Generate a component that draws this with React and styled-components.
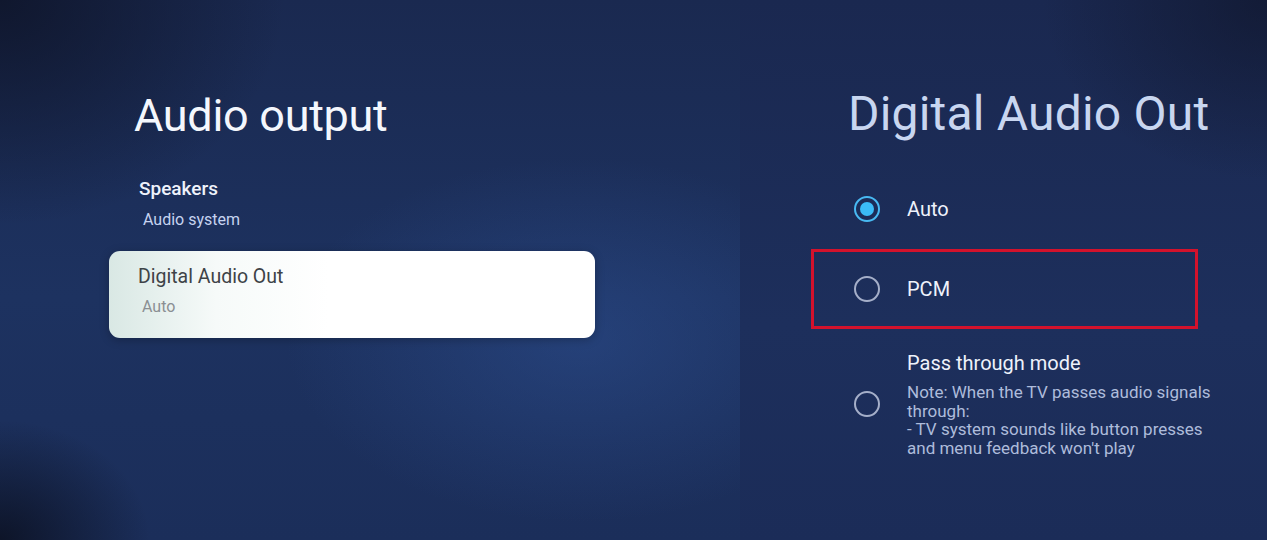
import React from "react";
import styled, { createGlobalStyle } from "styled-components";

// Estilos globales
const GlobalStyle = createGlobalStyle`
  html, body {
    margin: 0;
    padding: 0;
    background: #141d36;
    font-family: Roboto, "Noto Sans", "Liberation Sans", sans-serif;
  }
`;

const Screen = styled.div`
  width: 1267px;
  height: 540px;
  display: flex;
  overflow: hidden;
  background: #17254c;
`;

const LeftPanel = styled.section`
  width: 740px;
  flex-shrink: 0;
  box-sizing: border-box;
  padding: 86px 0 0 109px;
  display: flex;
  flex-direction: column;
  background:
    radial-gradient(ellipse 420px 260px at 580px 340px, rgba(50, 88, 160, 0.4), rgba(50, 88, 160, 0) 70%),
    radial-gradient(ellipse 380px 300px at 0px 0px, rgba(14, 20, 40, 0.85), rgba(14, 20, 40, 0) 75%),
    radial-gradient(ellipse 200px 160px at 0px 540px, rgba(10, 14, 28, 0.8), rgba(10, 14, 28, 0) 75%),
    linear-gradient(180deg, #1a2950 0%, #1d3260 55%, #1b2e5a 100%);
`;

const RightPanel = styled.section`
  flex: 1;
  box-sizing: border-box;
  padding: 84px 0 0 71px;
  display: flex;
  flex-direction: column;
  background:
    radial-gradient(ellipse 300px 240px at 527px 0px, rgba(16, 22, 44, 0.7), rgba(16, 22, 44, 0) 75%),
    linear-gradient(180deg, #1a2850 0%, #1d2f5c 60%, #1b2c58 100%);
`;

const Title = styled.h1`
  margin: 0 0 ${({ $gap }) => $gap}px ${({ $indent }) => $indent}px;
  font-size: ${({ $size }) => $size}px;
  font-weight: 400;
  line-height: 60px;
  letter-spacing: ${({ $spacing }) => $spacing || 0}px;
  color: ${({ $color }) => $color};
  white-space: nowrap;
`;

const MenuItem = styled.div`
  width: 486px;
  box-sizing: border-box;
  padding: ${({ $selected }) => ($selected ? "13px 29px 0" : "0 30px")};
  height: ${({ $selected }) => ($selected ? "87px" : "auto")};
  margin-bottom: ${({ $selected }) => ($selected ? "0" : "20px")};
  border-radius: 11px;
  background: ${({ $selected }) =>
    $selected
      ? "linear-gradient(90deg, #d9e8e4 0%, #f6faf9 22%, #ffffff 45%, #ffffff 100%)"
      : "transparent"};
  box-shadow: ${({ $selected }) => ($selected ? "0 2px 10px rgba(0,0,0,0.25)" : "none")};
`;

const ItemTitle = styled.div`
  font-size: ${({ $selected }) => ($selected ? "19.5px" : "19px")};
  line-height: 26px;
  font-weight: ${({ $selected }) => ($selected ? 400 : 500)};
  color: ${({ $selected }) => ($selected ? "#3e4347" : "#eef2fb")};
`;

const ItemValue = styled.div`
  margin-top: ${({ $selected }) => ($selected ? "6px" : "7px")};
  margin-left: 4px;
  font-size: 16px;
  line-height: 22px;
  color: ${({ $selected }) => ($selected ? "#8b8f93" : "#c6d3f0")};
`;

const Options = styled.div`
  display: flex;
  flex-direction: column;
  width: 387px;
`;

const Option = styled.div`
  display: flex;
  align-items: ${({ $multi }) => ($multi ? "flex-start" : "center")};
  gap: 27px;
  box-sizing: border-box;
  height: ${({ $height }) => $height}px;
  padding-left: 40px;
  border: 3px solid ${({ $marked }) => ($marked ? "#d3122c" : "transparent")};
`;

const Radio = styled.span`
  width: 26px;
  height: 26px;
  flex-shrink: 0;
  box-sizing: border-box;
  border-radius: 50%;
  border: 2px solid ${({ $checked }) => ($checked ? "#48b9f2" : "#a5afc9")};
  display: flex;
  align-items: center;
  justify-content: center;
  margin-top: ${({ $offset }) => $offset || 0}px;

  &::after {
    content: "";
    display: ${({ $checked }) => ($checked ? "block" : "none")};
    width: 14px;
    height: 14px;
    border-radius: 50%;
    background: #3bbcf7;
  }
`;

const OptionLabel = styled.div`
  font-size: 20px;
  line-height: 24px;
  color: #eef2fb;
`;

const OptionBody = styled.div`
  display: flex;
  flex-direction: column;
  padding-top: 19px;
`;

const Note = styled.div`
  margin-top: 8px;
  font-size: 17px;
  line-height: 18.5px;
  color: #aebcdb;
  width: 312px;
`;

const menu = [
  { title: "Speakers", value: "Audio system" },
  { title: "Digital Audio Out", value: "Auto", selected: true },
];

export default function App() {
  return (
    <>
      <GlobalStyle />
      <Screen>
        <LeftPanel>
          <Title $color="#f4f7fd" $indent={25} $gap={30} $size={45} $spacing={-0.3}>
            Audio output
          </Title>
          {menu.map((item) => (
            <MenuItem key={item.title} $selected={item.selected}>
              <ItemTitle $selected={item.selected}>{item.title}</ItemTitle>
              <ItemValue $selected={item.selected}>{item.value}</ItemValue>
            </MenuItem>
          ))}
        </LeftPanel>
        <RightPanel>
          <Title $color="#c8d6f0" $indent={37} $gap={25} $size={48} $spacing={0.2}>
            Digital Audio Out
          </Title>
          <Options>
            <Option $height={80}>
              <Radio $checked />
              <OptionLabel>Auto</OptionLabel>
            </Option>
            <Option $height={80} $marked>
              <Radio />
              <OptionLabel>PCM</OptionLabel>
            </Option>
            <Option $height={140} $multi>
              <Radio $offset={59} />
              <OptionBody>
                <OptionLabel>Pass through mode</OptionLabel>
                <Note>
                  Note: When the TV passes audio signals through:
                  <br />- TV system sounds like button presses and menu feedback won't play
                </Note>
              </OptionBody>
            </Option>
          </Options>
        </RightPanel>
      </Screen>
    </>
  );
}
